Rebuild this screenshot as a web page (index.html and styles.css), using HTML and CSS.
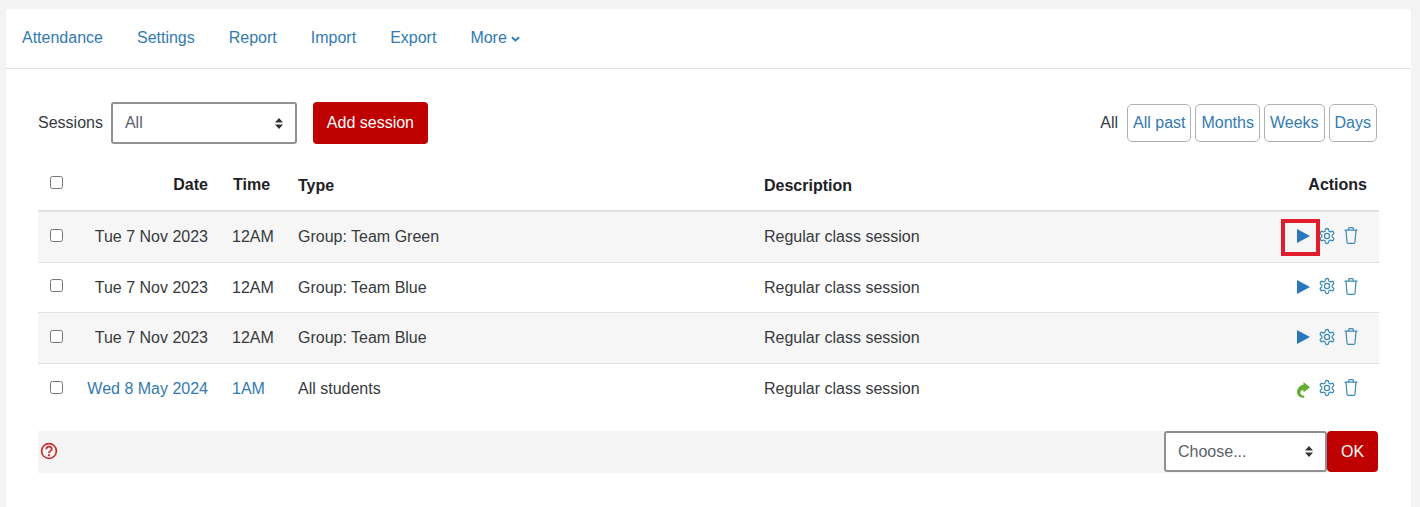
FILE: index.html
```html
<!DOCTYPE html>
<html lang="en">
<head>
  <meta charset="UTF-8">
  <meta name="viewport" content="width=device-width, initial-scale=1.0">
  <title>Attendance</title>
  <link rel="stylesheet" href="styles.css">
</head>
<body>
  <svg class="icon-defs" width="0" height="0">
    <symbol id="i-play" viewBox="0 0 13 14">
      <path d="M0 0 L13 7 L0 14 Z" fill="currentColor"/>
    </symbol>
    <symbol id="i-gear" viewBox="0 0 24 24">
      <path fill="none" stroke="currentColor" stroke-width="1.7" d="M12.22 2h-.44a2 2 0 0 0-2 2v.18a2 2 0 0 1-1 1.73l-.43.25a2 2 0 0 1-2 0l-.15-.08a2 2 0 0 0-2.73.73l-.22.38a2 2 0 0 0 .73 2.73l.15.1a2 2 0 0 1 1 1.72v.51a2 2 0 0 1-1 1.74l-.15.09a2 2 0 0 0-.73 2.73l.22.38a2 2 0 0 0 2.73.73l.15-.08a2 2 0 0 1 2 0l.43.25a2 2 0 0 1 1 1.73V20a2 2 0 0 0 2 2h.44a2 2 0 0 0 2-2v-.18a2 2 0 0 1 1-1.73l.43-.25a2 2 0 0 1 2 0l.15.08a2 2 0 0 0 2.73-.73l.22-.39a2 2 0 0 0-.73-2.73l-.15-.08a2 2 0 0 1-1-1.74v-.5a2 2 0 0 1 1-1.74l.15-.09a2 2 0 0 0 .73-2.73l-.22-.38a2 2 0 0 0-2.73-.73l-.15.08a2 2 0 0 1-2 0l-.43-.25a2 2 0 0 1-1-1.73V4a2 2 0 0 0-2-2z"/>
      <circle cx="12" cy="12" r="3.4" fill="none" stroke="currentColor" stroke-width="1.7"/>
    </symbol>
    <symbol id="i-trash" viewBox="0 0 14 17">
      <path fill="none" stroke="currentColor" stroke-width="1.2" d="M0.5 3.2 H13.5 M4.6 3 V1.7 Q4.6 0.6 5.7 0.6 H8.3 Q9.4 0.6 9.4 1.7 V3 M2 3.4 L3 15 Q3.1 16.4 4.3 16.4 H9.7 Q10.9 16.4 11 15 L12 3.4"/>
    </symbol>
    <symbol id="i-redo" viewBox="0 0 13 16">
      <path fill="currentColor" d="M6.5 0 L13 5.2 L6.5 10.6 V8 C5 8 3.4 8.8 3.4 10.6 C3.4 12.2 4.8 13.6 7.4 14 L7.2 15.8 C2.8 15.8 0 13.4 0 10.2 C0 6.2 3 3.2 6.5 2.7 Z"/>
    </symbol>
    <symbol id="i-help" viewBox="0 0 18 18">
      <circle cx="9" cy="9" r="7.4" fill="none" stroke="currentColor" stroke-width="1.7"/>
      <path fill="none" stroke="currentColor" stroke-width="1.8" d="M6.3 7.2 C6.3 3.9 11.8 3.9 11.8 7 C11.8 8.9 9 8.9 9 11"/>
      <circle cx="9" cy="13.2" r="1.1" fill="currentColor"/>
    </symbol>
  </svg>

  <div class="card">
    <nav class="tabs">
      <a href="#">Attendance</a>
      <a href="#">Settings</a>
      <a href="#">Report</a>
      <a href="#">Import</a>
      <a href="#">Export</a>
      <a href="#" class="more">More
        <svg class="chevron" viewBox="0 0 10 6" width="9" height="6"><path d="M1 1 L5 4.6 L9 1" fill="none" stroke="currentColor" stroke-width="2.2"/></svg>
      </a>
    </nav>

    <div class="content">
      <div class="toolbar">
        <div class="toolbar-left">
          <label for="sessions">Sessions</label>
          <select id="sessions" class="select select-sessions">
            <option>All</option>
          </select>
          <button class="btn btn-primary btn-add">Add session</button>
        </div>
        <div class="toolbar-right">
          <span class="current-filter">All</span>
          <a href="#" class="filter">All past</a>
          <a href="#" class="filter">Months</a>
          <a href="#" class="filter">Weeks</a>
          <a href="#" class="filter">Days</a>
        </div>
      </div>

      <table class="sessions-table">
        <colgroup>
          <col class="col-check">
          <col class="col-date">
          <col class="col-time">
          <col class="col-type">
          <col class="col-desc">
          <col class="col-actions">
        </colgroup>
        <thead>
          <tr>
            <th><input type="checkbox"></th>
            <th class="right">Date</th>
            <th class="head-time">Time</th>
            <th class="low">Type</th>
            <th class="low">Description</th>
            <th class="right">Actions</th>
          </tr>
        </thead>
        <tbody>
          <tr>
            <td><input type="checkbox"></td>
            <td class="right">Tue 7 Nov 2023</td>
            <td>12AM</td>
            <td>Group: Team Green</td>
            <td>Regular class session</td>
            <td class="right">
              <div class="actions">
                <span class="marked">
                  <svg class="ic ic-play"><use href="#i-play"/></svg>
                  <span class="highlight"></span>
                </span>
                <svg class="ic ic-gear"><use href="#i-gear"/></svg>
                <svg class="ic ic-trash"><use href="#i-trash"/></svg>
              </div>
            </td>
          </tr>
          <tr>
            <td><input type="checkbox"></td>
            <td class="right">Tue 7 Nov 2023</td>
            <td>12AM</td>
            <td>Group: Team Blue</td>
            <td>Regular class session</td>
            <td class="right">
              <div class="actions">
                <svg class="ic ic-play"><use href="#i-play"/></svg>
                <svg class="ic ic-gear"><use href="#i-gear"/></svg>
                <svg class="ic ic-trash"><use href="#i-trash"/></svg>
              </div>
            </td>
          </tr>
          <tr>
            <td><input type="checkbox"></td>
            <td class="right">Tue 7 Nov 2023</td>
            <td>12AM</td>
            <td>Group: Team Blue</td>
            <td>Regular class session</td>
            <td class="right">
              <div class="actions">
                <svg class="ic ic-play"><use href="#i-play"/></svg>
                <svg class="ic ic-gear"><use href="#i-gear"/></svg>
                <svg class="ic ic-trash"><use href="#i-trash"/></svg>
              </div>
            </td>
          </tr>
          <tr>
            <td><input type="checkbox"></td>
            <td class="right"><a href="#">Wed 8 May 2024</a></td>
            <td><a href="#">1AM</a></td>
            <td>All students</td>
            <td>Regular class session</td>
            <td class="right">
              <div class="actions">
                <svg class="ic ic-redo"><use href="#i-redo"/></svg>
                <svg class="ic ic-gear"><use href="#i-gear"/></svg>
                <svg class="ic ic-trash"><use href="#i-trash"/></svg>
              </div>
            </td>
          </tr>
        </tbody>
      </table>

      <div class="footer-row">
        <div class="footer-bar">
          <svg class="ic ic-help"><use href="#i-help"/></svg>
          <select class="select select-choose">
            <option>Choose...</option>
          </select>
        </div>
        <button class="btn btn-primary btn-ok">OK</button>
      </div>
    </div>
  </div>
</body>
</html>
```

FILE: styles.css
```css
:root {
  --link: #337ab0;
  --red: #bf0000;
  --text: #373a3c;
}

html, body {
  margin: 0;
  height: 100%;
  overflow: hidden;
}

body {
  background-color: #f3f3f3;
  color: var(--text);
  font-family: "Liberation Sans", Arial, sans-serif;
  font-size: 16px;
  padding: 9px 9px 0 6px;
  box-sizing: border-box;
}

a {
  color: var(--link);
  text-decoration: none;
}

.icon-defs {
  display: block;
  height: 0;
}

.card {
  background-color: #fff;
  height: 498px;
}

.tabs {
  display: flex;
  align-items: center;
  gap: 34px;
  height: 60px;
  padding: 0 0 2px 16px;
  box-sizing: border-box;
  border-bottom: 1px solid #dee2e6;
}

.more {
  display: flex;
  align-items: center;
  gap: 4px;
}

.chevron {
  margin-top: 2px;
}

.content {
  padding: 33px 32px 0;
}

.toolbar {
  display: flex;
  justify-content: space-between;
  align-items: center;
  height: 42px;
}

.toolbar-left {
  display: flex;
  align-items: center;
}

.toolbar-left label {
  margin-right: 8px;
}

.select {
  appearance: none;
  -webkit-appearance: none;
  height: 42px;
  box-sizing: border-box;
  border: 2px solid #8f9194;
  border-radius: 3px;
  background-color: #fff;
  background-image: url("data:image/svg+xml;utf8,<svg xmlns='http://www.w3.org/2000/svg' width='8' height='11'><path d='M4 0 L8 4.4 H0 Z M4 11 L0 6.6 H8 Z' fill='%23333'/></svg>");
  background-repeat: no-repeat;
  background-position: right 12px center;
  color: #5c6167;
  font-family: inherit;
  font-size: 16px;
  padding: 0 12px 2px;
}

.select-sessions {
  width: 186px;
  margin-right: 16px;
}

.select-choose {
  width: 163px;
  height: 41px;
  align-self: flex-start;
  padding-bottom: 0;
}

.btn {
  border: none;
  border-radius: 4px;
  color: #fff;
  font-family: inherit;
  font-size: 16px;
  cursor: pointer;
}

.btn-primary {
  background-color: var(--red);
}

.btn-add {
  width: 115px;
  height: 42px;
}

.btn-ok {
  width: 51px;
  height: 41px;
}

.toolbar-right {
  display: flex;
  align-items: center;
  gap: 4px;
  padding-right: 2px;
}

.current-filter {
  margin-right: 5px;
}

.filter {
  display: flex;
  align-items: center;
  height: 38px;
  box-sizing: border-box;
  padding: 0 5px;
  border: 1px solid #aeb1b5;
  border-radius: 5px;
}

.sessions-table {
  width: 1341px;
  margin-top: 20px;
  border-collapse: collapse;
  table-layout: fixed;
}

.col-check { width: 37px; }
.col-date { width: 145px; }
.col-time { width: 66px; }
.col-type { width: 466px; }
.col-desc { width: 400px; }
.col-actions { width: 227px; }

.sessions-table th,
.sessions-table td {
  padding: 0 12px;
  text-align: left;
  white-space: nowrap;
}

.sessions-table th {
  height: 47px;
  padding-bottom: 5px;
  box-sizing: border-box;
  color: #1d2125;
  border-bottom: 2px solid #dee2e6;
}

.sessions-table th.low {
  padding-bottom: 3px;
}

.sessions-table th.head-time {
  padding-left: 13px;
}

.sessions-table td {
  height: 50px;
  border-top: 1px solid #dee2e6;
}

.sessions-table tbody tr:first-child td {
  border-top: none;
}

.sessions-table tbody tr:nth-child(2) td {
  height: 49px;
}

.sessions-table tbody tr:nth-child(odd) td {
  background-color: #f6f6f6;
}

.sessions-table .right {
  text-align: right;
}

input[type="checkbox"] {
  display: block;
  width: 13px;
  height: 13px;
  margin: 0 0 4px;
}

.actions {
  display: flex;
  justify-content: flex-end;
  align-items: center;
  gap: 8px;
  margin-top: -2px;
  padding-right: 9px;
}

.ic {
  display: block;
}

.ic-play {
  width: 13px;
  height: 14px;
  color: #2878bb;
}

.ic-gear {
  width: 18px;
  height: 18px;
  color: #3d8bb3;
  margin-bottom: 1px;
}

.ic-trash {
  width: 14px;
  height: 17px;
  color: #3d8bb3;
  margin-bottom: 1px;
}

.ic-redo {
  width: 13px;
  height: 16px;
  color: #66ad33;
  margin-top: 3px;
}

.marked {
  position: relative;
  display: block;
}

.highlight {
  position: absolute;
  left: -16px;
  top: -10px;
  width: 39px;
  height: 37px;
  box-sizing: border-box;
  border: 4px solid #e21b2d;
}

.footer-row {
  display: flex;
  align-items: flex-start;
  margin-top: 17px;
  width: 1340px;
}

.footer-bar {
  flex: 1;
  display: flex;
  justify-content: space-between;
  align-items: center;
  height: 42px;
  padding-left: 2px;
  background-color: #f5f5f5;
}

.ic-help {
  width: 18px;
  height: 18px;
  color: #c9302c;
  margin-bottom: 3px;
}
```
